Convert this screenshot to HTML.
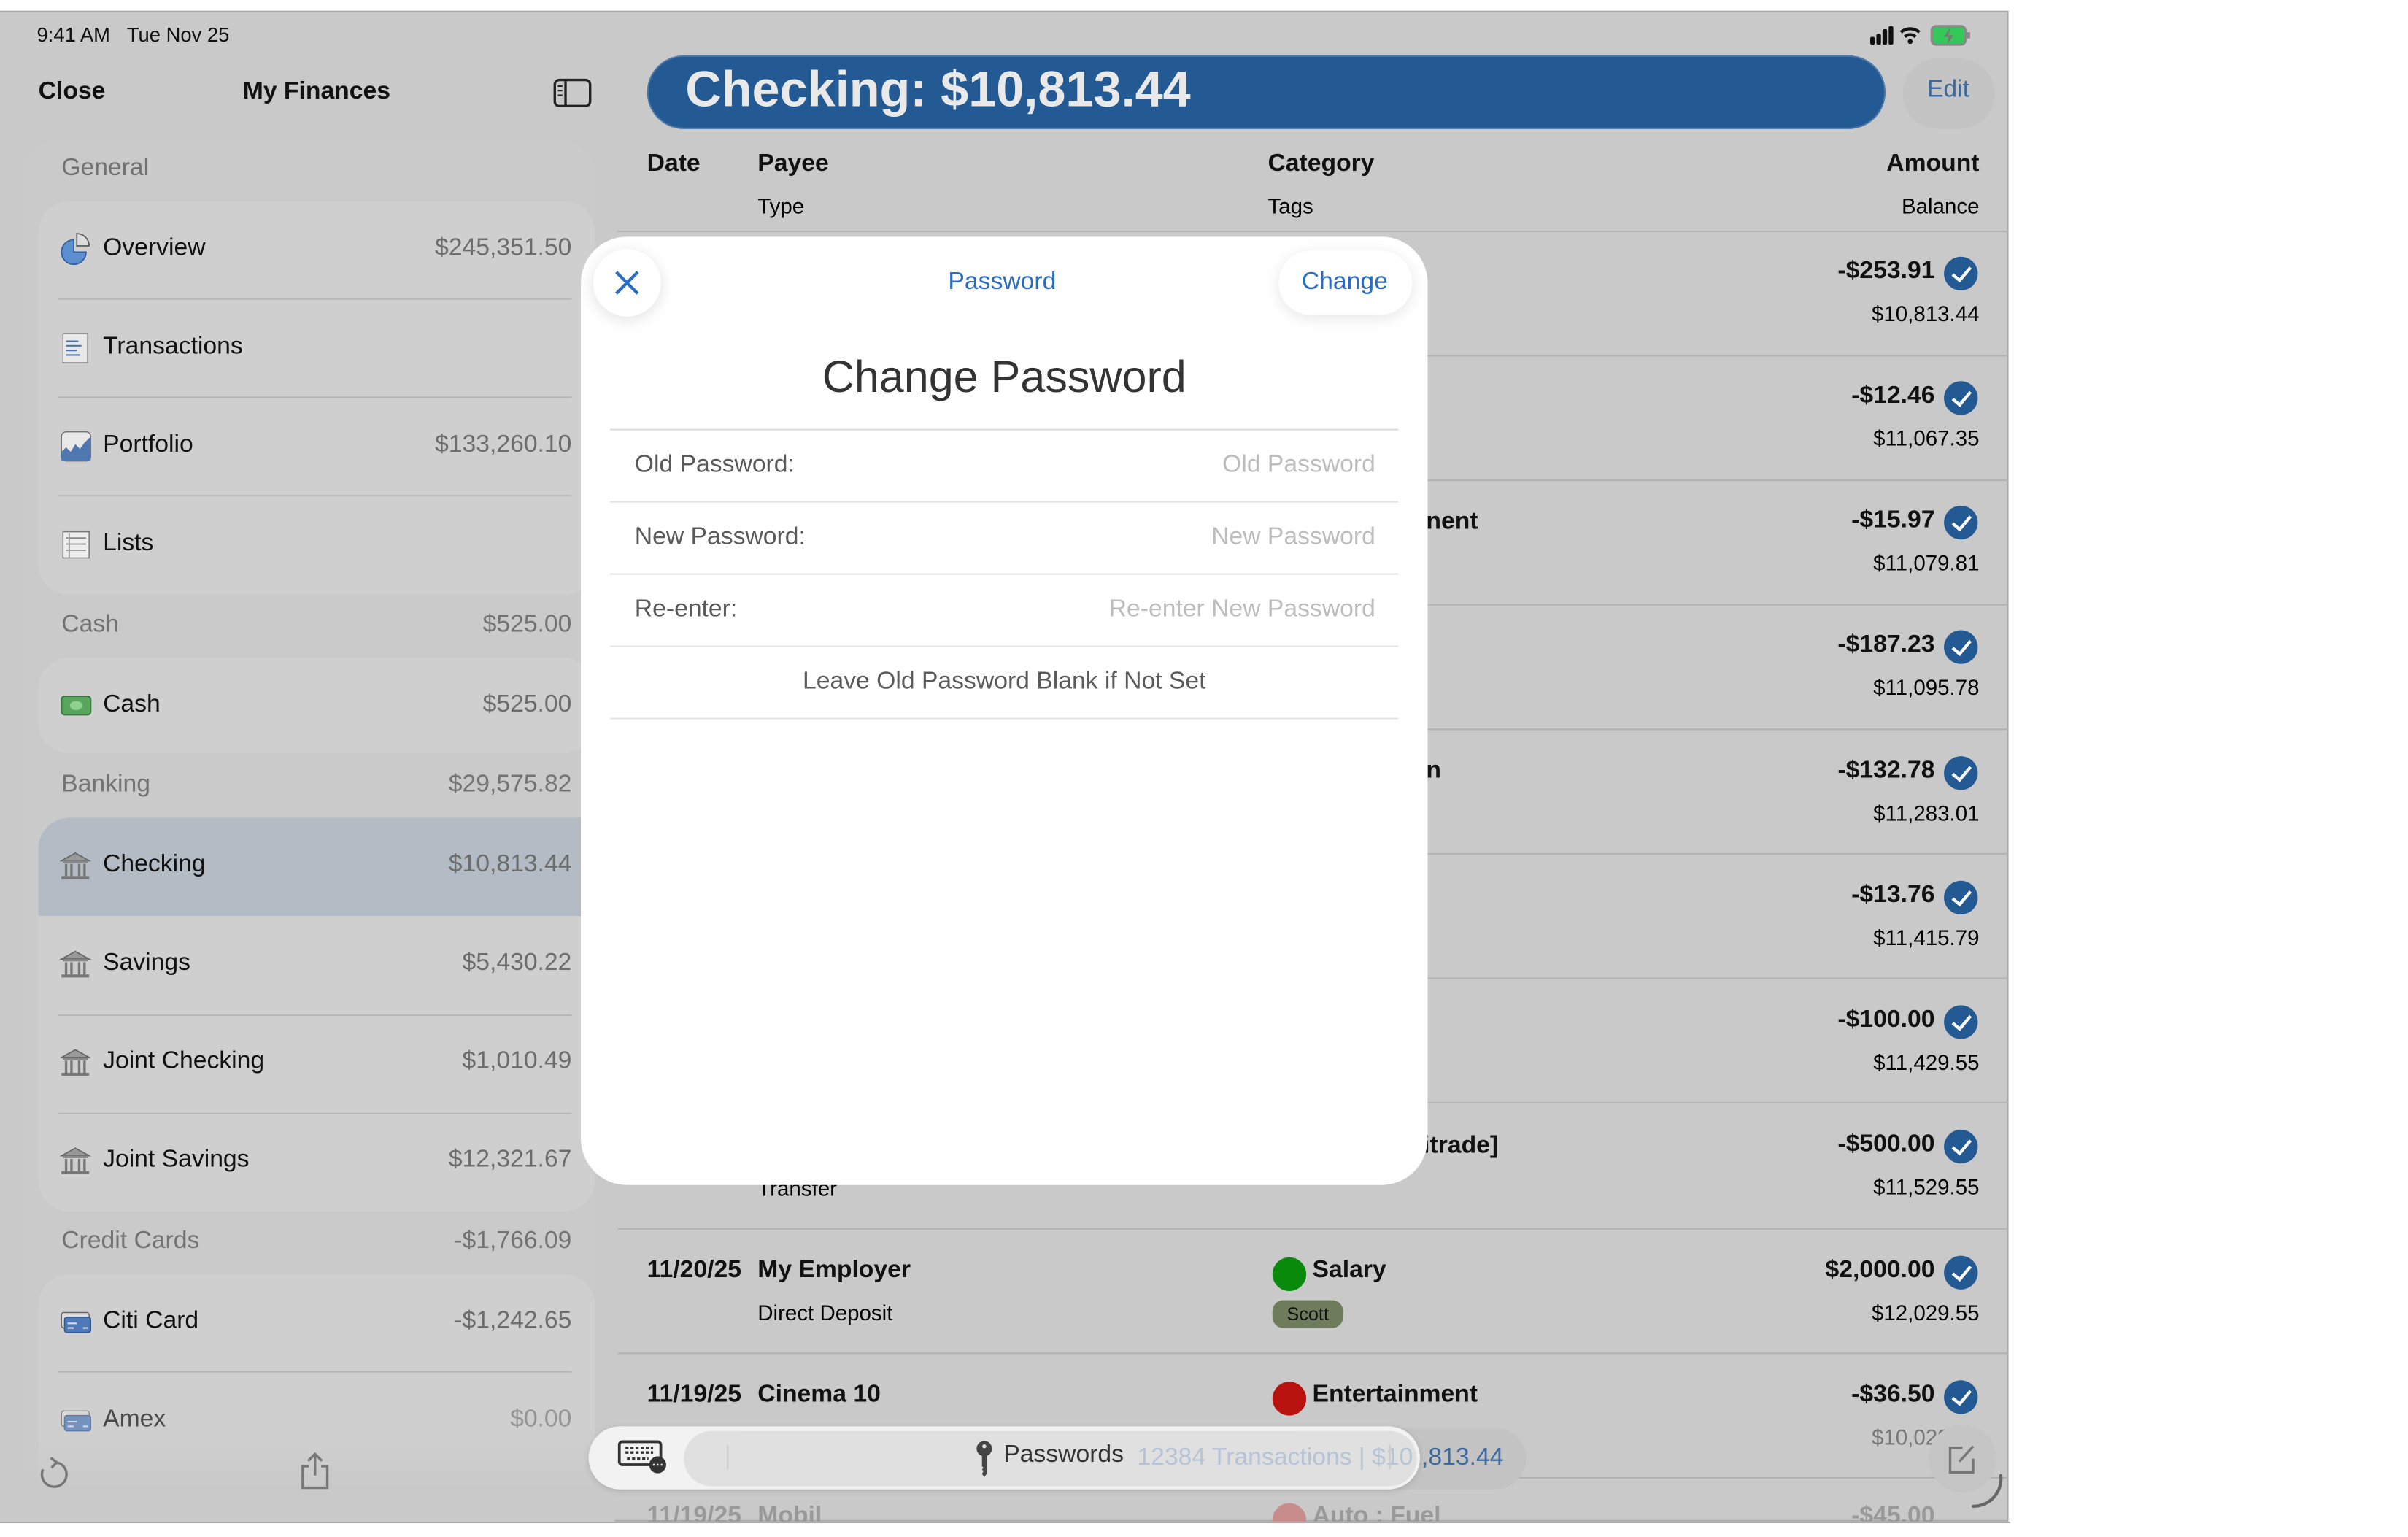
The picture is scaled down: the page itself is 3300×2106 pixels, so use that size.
<!DOCTYPE html>
<html><head><meta charset="utf-8"><style>
*{margin:0;padding:0;box-sizing:border-box}
html,body{width:3300px;height:2100px;overflow:hidden;background:#fff;font-family:"Liberation Sans",sans-serif}
#w{position:absolute;left:0;top:0;width:1570px;height:1000px;transform:scale(2.106);transform-origin:0 0;overflow:hidden}
.a{position:absolute;white-space:nowrap}
.scr{position:absolute;left:0;top:7px;width:1307px;height:983px;background:#c9c9c9;border-top:1px solid #a8a8a8;border-right:1px solid #aaa;border-bottom:1px solid #aaa;overflow:hidden}
.side{position:absolute;left:14px;top:84px;width:373px;height:900px;background:#cacaca;border-radius:22px}
.card{position:absolute;left:25px;width:362px;background:#cfcfcf;border-radius:20px}
.lbl{font-size:16px;color:#111}
.val{font-size:16px;color:#6d6d6d;text-align:right}
.hdr{font-size:16px;color:#737373}
.sep{position:absolute;height:1px;background:#b6b6b6}
.b{font-weight:bold}
.m{font-size:16px;color:#111}
.chk{position:absolute;width:22px;height:22px;border-radius:50%;background:#245a93}
.chk:after{content:"";position:absolute;left:8px;top:4px;width:5px;height:10px;border:solid #fff;border-width:0 2px 2px 0;transform:rotate(40deg)}
.ph{color:#bdbdbd;font-size:16px;text-align:right}
.fl{color:#5a5a5a;font-size:16px}
</style></head><body><div id="w">
<div class="scr">
<div class="side"></div>
</div>
<div class="a" style="left:24px;top:15px;font-size:13px;color:#111">9:41 AM&nbsp;&nbsp;&nbsp;Tue Nov 25</div>
<svg class="a" style="left:1216px;top:16px" width="68" height="14" viewBox="0 0 68 14">
<rect x="1" y="8" width="3" height="5" rx="1" fill="#111"/><rect x="5" y="6" width="3" height="7" rx="1" fill="#111"/><rect x="9" y="3" width="3" height="10" rx="1" fill="#111"/><rect x="13" y="1" width="3" height="12" rx="1" fill="#111"/>
<path d="M21 5a9 9 0 0 1 12 0M23.5 8a5 5 0 0 1 7 0" stroke="#111" stroke-width="2" fill="none"/><circle cx="27" cy="11" r="1.6" fill="#111"/>
<rect x="41" y="1" width="22" height="12" rx="3" fill="#34c759" stroke="#888" stroke-width="1.5"/><rect x="64" y="5" width="2" height="4" fill="#888"/><path d="M53 2l-4 6h3l-1 5 4-6h-3z" fill="#777"/>
</svg>
<div class="a b" style="left:25px;top:51px;font-size:16px;color:#111">Close</div>
<div class="a b" style="left:158px;top:51px;font-size:16px;color:#111">My Finances</div>
<svg class="a" style="left:360px;top:51px" width="25" height="19" viewBox="0 0 25 19"><rect x="1" y="1" width="23" height="17" rx="3" fill="none" stroke="#222" stroke-width="1.6"/><line x1="8" y1="1" x2="8" y2="18" stroke="#222" stroke-width="1.6"/><path d="M3 5h3M3 8h3M3 11h3" stroke="#222" stroke-width="1"/></svg>

<div class="a hdr" style="left:40px;top:101px">General</div>
<div class="card" style="top:131px;height:256px"></div>
<div class="sep" style="left:38px;top:194px;width:334px"></div>
<div class="sep" style="left:38px;top:258px;width:334px"></div>
<div class="sep" style="left:38px;top:322px;width:334px"></div>
<svg class="a" style="left:39px;top:151px" width="21" height="22" viewBox="0 0 21 22"><path d="M9 5a8 8 0 1 0 8 8H9z" fill="#5b8fd0" stroke="#2d5c99" stroke-width=".8"/><path d="M11 1a8 8 0 0 1 8 8h-8z" fill="#ddd" stroke="#555" stroke-width=".8"/></svg>
<div class="a lbl" style="left:67px;top:153px">Overview</div><div class="a val" style="right:1198px;top:153px">$245,351.50</div>
<svg class="a" style="left:40px;top:216px" width="19" height="21" viewBox="0 0 19 21"><rect x="1" y="1" width="16" height="19" fill="#e8e8e8" stroke="#777" stroke-width=".6"/><path d="M3 6h8M3 9h10M3 12h7M3 15h9" stroke="#4b74b5" stroke-width="1"/></svg>
<div class="a lbl" style="left:67px;top:217px">Transactions</div>
<svg class="a" style="left:39px;top:280px" width="21" height="21" viewBox="0 0 21 21"><rect x="1" y="1" width="19" height="19" rx="3" fill="#e8e8e8" stroke="#666" stroke-width=".6"/><path d="M1 20V14l3-3 3 3 3-5 3 3 3-4 4-4v16z" fill="#4f78b0"/></svg>
<div class="a lbl" style="left:67px;top:281px">Portfolio</div><div class="a val" style="right:1198px;top:281px">$133,260.10</div>
<svg class="a" style="left:40px;top:345px" width="19" height="19" viewBox="0 0 19 19"><rect x="1" y="1" width="17" height="17" fill="#eee" stroke="#777" stroke-width=".7"/><path d="M3 5h13M3 9h13M3 13h13M5 2v16" stroke="#888" stroke-width=".8"/></svg>
<div class="a lbl" style="left:67px;top:345px">Lists</div>

<div class="a hdr" style="left:40px;top:398px">Cash</div><div class="a hdr" style="right:1198px;top:398px">$525.00</div>
<div class="card" style="top:428px;height:62px"></div>
<svg class="a" style="left:39px;top:452px" width="21" height="15" viewBox="0 0 21 15"><rect x="1" y="1" width="19" height="12" rx="2" fill="#58a55c" stroke="#3b7a3e"/><ellipse cx="10.5" cy="7" rx="4" ry="3" fill="#8fcf8f"/></svg>
<div class="a lbl" style="left:67px;top:450px">Cash</div><div class="a val" style="right:1198px;top:450px">$525.00</div>

<div class="a hdr" style="left:40px;top:502px">Banking</div><div class="a hdr" style="right:1198px;top:502px">$29,575.82</div>
<div class="card" style="top:532px;height:256px"></div>
<div class="a" style="left:25px;top:532px;width:353px;height:64px;background:#b3bcc4;border-radius:20px 0 0 0"></div>
<div class="sep" style="left:38px;top:660px;width:334px"></div>
<div class="sep" style="left:38px;top:724px;width:334px"></div>
<svg width="0" height="0" style="position:absolute"><defs><g id="bank"><path d="M10 1L1 6h18z" fill="#999" stroke="#666" stroke-width=".8"/><rect x="2" y="6" width="16" height="1.5" fill="#888"/><path d="M4 8v8M7.5 8v8M12.5 8v8M16 8v8" stroke="#777" stroke-width="1.6"/><rect x="1" y="16" width="18" height="2" fill="#777"/></g><g id="cc"><rect x="1" y="1" width="18" height="10" rx="1.5" fill="#ddd" stroke="#666" stroke-width=".7"/><rect x="3" y="4" width="17" height="10" rx="1.5" fill="#4d79b8" stroke="#33588a" stroke-width=".7"/><path d="M5 8h6M5 11h4M15 11h3" stroke="#dde" stroke-width="1"/></g></defs></svg>
<svg class="a" style="left:39px;top:554px" width="21" height="19"><use href="#bank"/></svg>
<div class="a lbl" style="left:67px;top:554px">Checking</div><div class="a val" style="right:1198px;top:554px">$10,813.44</div>
<svg class="a" style="left:39px;top:618px" width="21" height="19"><use href="#bank"/></svg>
<div class="a lbl" style="left:67px;top:618px">Savings</div><div class="a val" style="right:1198px;top:618px">$5,430.22</div>
<svg class="a" style="left:39px;top:682px" width="21" height="19"><use href="#bank"/></svg>
<div class="a lbl" style="left:67px;top:682px">Joint Checking</div><div class="a val" style="right:1198px;top:682px">$1,010.49</div>
<svg class="a" style="left:39px;top:746px" width="21" height="19"><use href="#bank"/></svg>
<div class="a lbl" style="left:67px;top:746px">Joint Savings</div><div class="a val" style="right:1198px;top:746px">$12,321.67</div>

<div class="a hdr" style="left:40px;top:799px">Credit Cards</div><div class="a hdr" style="right:1198px;top:799px">-$1,766.09</div>
<div class="card" style="top:829px;height:160px"></div>
<div class="sep" style="left:38px;top:892px;width:334px"></div>
<svg class="a" style="left:39px;top:853px" width="21" height="16"><use href="#cc"/></svg>
<div class="a lbl" style="left:67px;top:851px">Citi Card</div><div class="a val" style="right:1198px;top:851px">-$1,242.65</div>
<svg class="a" style="left:39px;top:917px;opacity:.7" width="21" height="16"><use href="#cc"/></svg>
<div class="a lbl" style="left:67px;top:915px;opacity:.7">Amex</div><div class="a val" style="right:1198px;top:915px;opacity:.6">$0.00</div>
<div class="a" style="left:0;top:935px;width:400px;height:55px;background:linear-gradient(rgba(201,201,201,0),#c9c9c9 60%)"></div>
<svg class="a" style="left:23px;top:947px" width="24" height="24" viewBox="0 0 24 24"><path d="M14 4.5A8 8 0 1 1 5 9" fill="none" stroke="#777" stroke-width="1.6"/><path d="M10 1.5l4 3-3.5 3.5" fill="none" stroke="#777" stroke-width="1.6"/></svg>
<svg class="a" style="left:194px;top:944px" width="22" height="26" viewBox="0 0 22 26"><path d="M7 10H3v14h16V10h-4M11 2v14M6.5 6.5L11 2l4.5 4.5" fill="none" stroke="#777" stroke-width="1.6"/></svg>

<div class="a" style="left:421px;top:36px;width:806px;height:48px;background:#245a93;border-radius:24px;border:1px solid #4a77a8"></div>
<div class="a b" style="left:446px;top:40px;font-size:32.5px;color:#e9e9e9">Checking: $10,813.44</div>
<div class="a" style="left:1238px;top:38px;width:60px;height:46px;border-radius:23px;background:#c4c4c4"></div>
<div class="a" style="left:1254px;top:50px;font-size:16px;color:#3d6aa0">Edit</div>

<div class="a m b" style="left:421px;top:98px">Date</div>
<div class="a m b" style="left:493px;top:98px">Payee</div>
<div class="a m b" style="left:825px;top:98px">Category</div>
<div class="a m b" style="right:282px;top:98px">Amount</div>
<div class="a" style="left:493px;top:126px;font-size:14px">Type</div>
<div class="a" style="left:825px;top:126px;font-size:14px">Tags</div>
<div class="a" style="right:282px;top:126px;font-size:14px">Balance</div>

<div class="sep" style="left:402px;top:150px;width:905px;background:#b2b2b2"></div>
<div class="sep" style="left:402px;top:231px;width:905px;background:#b2b2b2"></div>
<div class="sep" style="left:402px;top:312px;width:905px;background:#b2b2b2"></div>
<div class="sep" style="left:402px;top:393px;width:905px;background:#b2b2b2"></div>
<div class="sep" style="left:402px;top:474px;width:905px;background:#b2b2b2"></div>
<div class="sep" style="left:402px;top:555px;width:905px;background:#b2b2b2"></div>
<div class="sep" style="left:402px;top:636px;width:905px;background:#b2b2b2"></div>
<div class="sep" style="left:402px;top:717px;width:905px;background:#b2b2b2"></div>
<div class="sep" style="left:402px;top:799px;width:905px;background:#b2b2b2"></div>
<div class="sep" style="left:402px;top:880px;width:905px;background:#b2b2b2"></div>
<div class="sep" style="left:402px;top:961px;width:905px;background:#b2b2b2"></div>

<div class="a m b" style="right:311px;top:168px">-$253.91</div><div class="chk" style="left:1265px;top:167px"></div><div class="a" style="right:282px;top:196px;font-size:14px">$10,813.44</div>
<div class="a m b" style="right:311px;top:249px">-$12.46</div><div class="chk" style="left:1265px;top:248px"></div><div class="a" style="right:282px;top:277px;font-size:14px">$11,067.35</div>
<div class="a m b" style="right:311px;top:330px">-$15.97</div><div class="chk" style="left:1265px;top:329px"></div><div class="a" style="right:282px;top:358px;font-size:14px">$11,079.81</div>
<div class="a m b" style="right:311px;top:411px">-$187.23</div><div class="chk" style="left:1265px;top:410px"></div><div class="a" style="right:282px;top:439px;font-size:14px">$11,095.78</div>
<div class="a m b" style="right:311px;top:493px">-$132.78</div><div class="chk" style="left:1265px;top:492px"></div><div class="a" style="right:282px;top:521px;font-size:14px">$11,283.01</div>
<div class="a m b" style="right:311px;top:574px">-$13.76</div><div class="chk" style="left:1265px;top:573px"></div><div class="a" style="right:282px;top:602px;font-size:14px">$11,415.79</div>
<div class="a m b" style="right:311px;top:655px">-$100.00</div><div class="chk" style="left:1265px;top:654px"></div><div class="a" style="right:282px;top:683px;font-size:14px">$11,429.55</div>
<div class="a m b" style="right:311px;top:736px">-$500.00</div><div class="chk" style="left:1265px;top:735px"></div><div class="a" style="right:282px;top:764px;font-size:14px">$11,529.55</div>
<div class="a m b" style="right:311px;top:818px">$2,000.00</div><div class="chk" style="left:1265px;top:817px"></div><div class="a" style="right:282px;top:846px;font-size:14px">$12,029.55</div>
<div class="a m b" style="right:311px;top:899px">-$36.50</div><div class="chk" style="left:1265px;top:898px"></div><div class="a" style="right:282px;top:927px;font-size:14px;color:#777">$10,029.55</div>

<div class="a m b" style="left:928px;top:331px">nent</div>
<div class="a m b" style="left:928px;top:493px">n</div>
<div class="a m b" style="left:926px;top:737px">itrade]</div>
<div class="a" style="left:493px;top:765px;font-size:14px">Transfer</div>

<div class="a m b" style="left:421px;top:818px">11/20/25</div><div class="a m b" style="left:493px;top:818px">My Employer</div>
<div class="a" style="left:828px;top:818px;width:22px;height:22px;border-radius:50%;background:#0a8a0a"></div><div class="a m b" style="left:854px;top:818px">Salary</div>
<div class="a" style="left:493px;top:846px;font-size:14px">Direct Deposit</div>
<div class="a" style="left:828px;top:846px;width:46px;height:18px;border-radius:7px;background:#6e7c5c;font-size:12px;color:#111;text-align:center;line-height:18px">Scott</div>

<div class="a m b" style="left:421px;top:899px">11/19/25</div><div class="a m b" style="left:493px;top:899px">Cinema 10</div>
<div class="a" style="left:828px;top:899px;width:22px;height:22px;border-radius:50%;background:#b8120f"></div><div class="a m b" style="left:854px;top:899px">Entertainment</div>
<div class="a" style="left:493px;top:927px;font-size:14px;color:#999">POS</div>
<div class="a m b" style="left:421px;top:978px;color:#999">11/19/25</div><div class="a m b" style="left:493px;top:978px;color:#999">Mobil</div>
<div class="a" style="left:828px;top:978px;width:22px;height:22px;border-radius:50%;background:#c98c8c"></div><div class="a m b" style="left:854px;top:978px;color:#999">Auto : Fuel</div>
<div class="a m b" style="right:311px;top:978px;color:#999">-$45.00</div>
<div class="a" style="left:0;top:990px;width:1570px;height:20px;background:#fff"></div>
<div class="a" style="left:0;top:990px;width:1308px;height:1px;background:#aaa"></div>

<div class="a" style="left:378px;top:154px;width:551px;height:617px;background:#fff;border-radius:30px"></div>
<div class="a" style="left:386px;top:162px;width:44px;height:44px;border-radius:50%;background:#fff;box-shadow:0 2px 10px rgba(0,0,0,.12)"></div>
<svg class="a" style="left:399px;top:175px" width="18" height="18" viewBox="0 0 18 18"><path d="M2 2l14 14M16 2L2 16" stroke="#2a6cbf" stroke-width="2"/></svg>
<div class="a" style="left:617px;top:175px;font-size:16px;color:#2a6cbf">Password</div>
<div class="a" style="left:832px;top:163px;width:87px;height:42px;border-radius:21px;background:#fff;box-shadow:0 2px 10px rgba(0,0,0,.1)"></div>
<div class="a" style="left:847px;top:175px;font-size:16px;color:#2a6cbf">Change</div>
<div class="a" style="left:378px;top:230px;width:551px;text-align:center;font-size:29px;color:#333">Change Password</div>
<div class="sep" style="left:397px;top:279px;width:513px;background:#ddd"></div>
<div class="sep" style="left:397px;top:326px;width:513px;background:#e4e4e4"></div>
<div class="sep" style="left:397px;top:373px;width:513px;background:#e4e4e4"></div>
<div class="sep" style="left:397px;top:420px;width:513px;background:#e4e4e4"></div>
<div class="sep" style="left:397px;top:467px;width:513px;background:#e4e4e4"></div>
<div class="a fl" style="left:413px;top:294px">Old Password:</div><div class="a ph" style="right:675px;top:294px">Old Password</div>
<div class="a fl" style="left:413px;top:341px">New Password:</div><div class="a ph" style="right:675px;top:341px">New Password</div>
<div class="a fl" style="left:413px;top:388px">Re-enter:</div><div class="a ph" style="right:675px;top:388px">Re-enter New Password</div>
<div class="a fl" style="left:378px;top:435px;width:551px;text-align:center">Leave Old Password Blank if Not Set</div>

<div class="a" style="left:883px;top:929px;width:110px;height:40px;border-radius:20px;background:#c3c3c3"></div>
<div class="a" style="left:383px;top:928px;width:541px;height:41px;border-radius:21px;background:#f2f2f2;box-shadow:0 1px 4px rgba(0,0,0,.12)"></div>
<div class="a" style="left:445px;top:931px;width:477px;height:36px;border-radius:18px;background:#e0e0e0"></div>
<svg class="a" style="left:402px;top:937px" width="32" height="22" viewBox="0 0 32 22"><rect x="1" y="1" width="27" height="15" rx="2" fill="none" stroke="#333" stroke-width="1.8"/><path d="M5 5h18M5 8h18M6 12h14" stroke="#333" stroke-width="1.6" stroke-dasharray="2 1.3"/><circle cx="26" cy="16" r="5.5" fill="#333"/><path d="M23 16h1M25.5 16h1M28 16h1" stroke="#fff" stroke-width="1.2"/></svg>
<div class="a" style="left:473px;top:940px;width:1px;height:16px;background:#ccc"></div>
<svg class="a" style="left:634px;top:937px" width="13" height="24" viewBox="0 0 13 24"><circle cx="6.5" cy="5.5" r="5" fill="#444"/><path d="M5 9h3v13l-1.5 2L5 22l1-2-1-1 1-1-1-1z" fill="#444"/><circle cx="6.5" cy="4" r="1.3" fill="#e0e0e0"/></svg>
<div class="a" style="left:653px;top:938px;font-size:16px;color:#333">Passwords</div>
<div class="a" style="left:740px;top:940px;font-size:16px;color:#9ab3d0;opacity:.6">12384 Transactions | $10</div>
<div class="a" style="left:925px;top:940px;font-size:16px;color:#3d6aa0">,813.44</div>
<div class="a" style="left:904px;top:940px;width:1px;height:16px;background:#ccc"></div>
<div class="a" style="left:1255px;top:927px;width:44px;height:44px;border-radius:50%;background:#c5c5c5"></div>
<svg class="a" style="left:1267px;top:938px" width="20" height="22" viewBox="0 0 20 22"><path d="M10 4H2v16h15v-9" fill="none" stroke="#777" stroke-width="1.6"/><path d="M8 13l9-10" stroke="#777" stroke-width="1.6"/></svg>
<svg class="a" style="left:1280px;top:958px" width="26" height="26" viewBox="0 0 26 26"><path d="M22 2a18 18 0 0 1-18 20" fill="none" stroke="#666" stroke-width="2" stroke-linecap="round"/></svg>
</div></body></html>
